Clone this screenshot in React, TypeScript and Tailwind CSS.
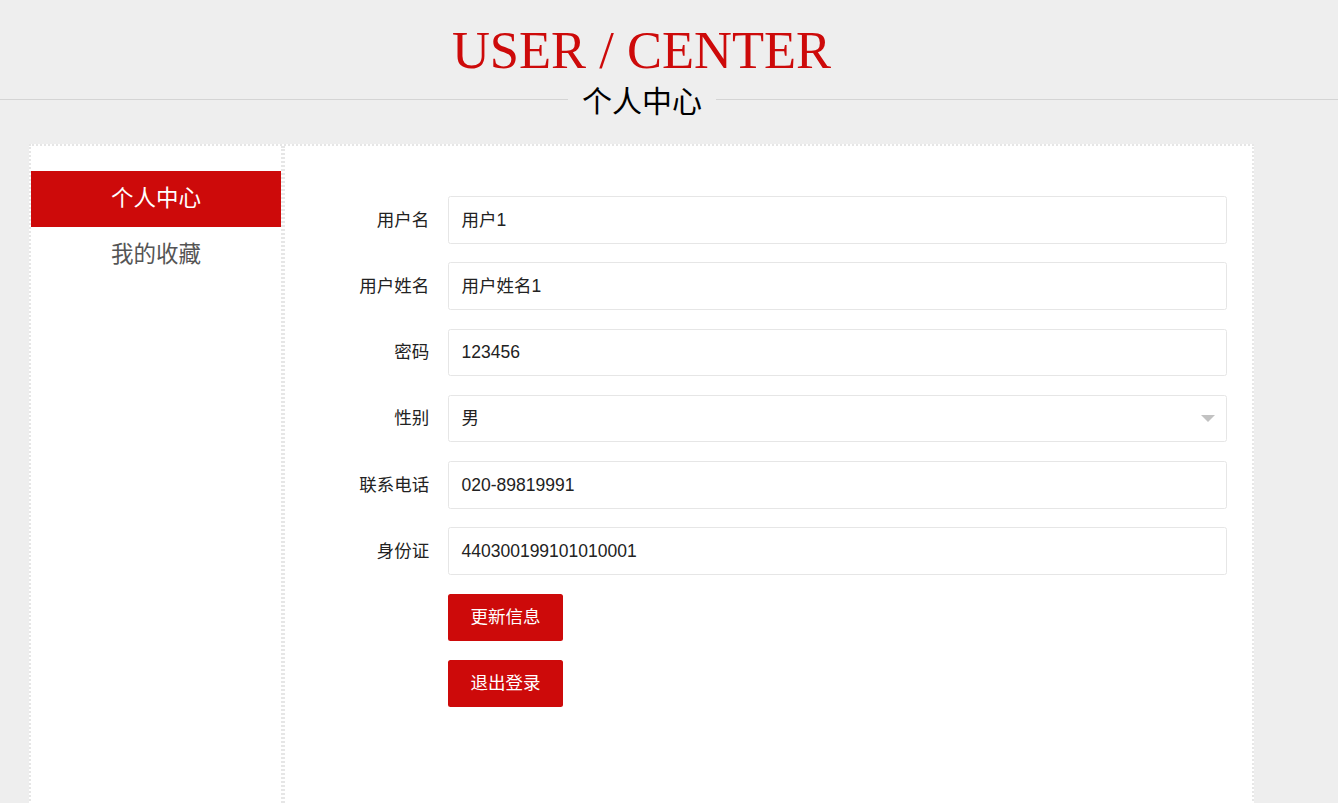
import React from 'react'

const fields = [
    { label: '用户名', value: '用户1' },
    { label: '用户姓名', value: '用户姓名1' },
    { label: '密码', value: '123456' },
    { label: '性别', value: '男', select: true },
    { label: '联系电话', value: '020-89819991' },
    { label: '身份证', value: '440300199101010001' },
]

export default function App() {
    return (
        <div className="min-h-screen bg-[#eeeeee] font-['Liberation_Sans','Noto_Sans_CJK_SC',sans-serif] text-[#333]">
            {/* Header */}
            <div className="pt-[24px]">
                <div className="w-[1283px] text-center">
                    <h1 className="font-['Liberation_Serif',serif] text-[52.5px] leading-none text-[#cd0a0a]">
                        USER / CENTER
                    </h1>
                </div>
                <div className="flex items-center mt-[7.5px]">
                    <div className="w-[568px] h-px bg-[#d4d4d4]" />
                    <span className="px-[14px] text-[30px] leading-none text-black font-['Noto_Sans_CJK_SC',sans-serif]">
                        个人中心
                    </span>
                    <div className="flex-1 h-px bg-[#d4d4d4]" />
                </div>
            </div>

            {/* Main box */}
            <div className="mt-[30px] ml-[29px] w-[1225px] min-h-[720px] bg-white border-2 border-dotted border-[#e6e6e6] flex">
                {/* Sidebar */}
                <div className="w-[252px] border-r-2 border-dotted border-[#e6e6e6] pt-[25px]">
                    <div className="h-[56px] flex items-center justify-center bg-[#cd0a0a] text-white text-[22.5px]">
                        个人中心
                    </div>
                    <div className="h-[56px] flex items-center justify-center text-[#555] text-[22.5px]">
                        我的收藏
                    </div>
                </div>

                {/* Form */}
                <div className="flex-1 border-l-2 border-dotted border-[#e6e6e6] pl-[25.5px] pr-[25px] pt-[50px]">
                    {fields.map((f) => (
                        <div key={f.label} className="flex items-center mb-[18.75px]">
                            <label className="w-[137.5px] pr-[18.75px] text-right text-[17.5px] text-[#222]">
                                {f.label}
                            </label>
                            <div className="flex-1 h-[47.5px] border border-[#e6e6e6] rounded-[2.5px] pl-[12.5px] pr-[11px] flex items-center justify-between text-[17.5px] text-[#222]">
                                <span>{f.value}</span>
                                {f.select && (
                                    <svg width="14" height="7" viewBox="0 0 14 7">
                                        <path d="M0 0 H14 L7 7 Z" fill="#c2c2c2" />
                                    </svg>
                                )}
                            </div>
                        </div>
                    ))}

                    <div className="ml-[137.5px] flex flex-col items-start gap-[18.75px]">
                        <button className="h-[47.5px] px-[22.5px] rounded-[2.5px] bg-[#cd0a0a] text-white text-[17.5px]">
                            更新信息
                        </button>
                        <button className="h-[47.5px] px-[22.5px] rounded-[2.5px] bg-[#cd0a0a] text-white text-[17.5px]">
                            退出登录
                        </button>
                    </div>
                </div>
            </div>
        </div>
    )
}
